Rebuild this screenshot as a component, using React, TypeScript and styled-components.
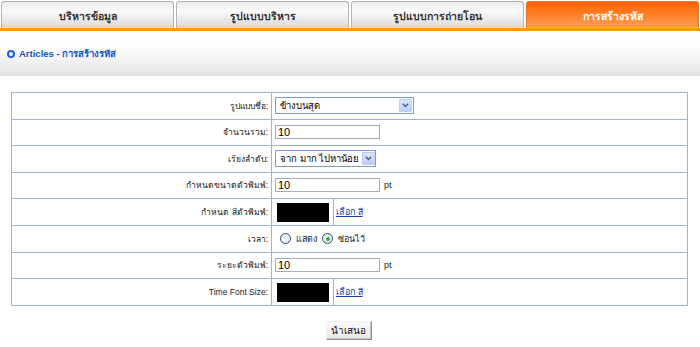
import React, { useState } from "react";
import styled, { createGlobalStyle } from "styled-components";

const GlobalStyle = createGlobalStyle`
  html, body {
    margin: 0;
    padding: 0;
    background: #ffffff;
    font-family: "Liberation Sans", "Noto Sans", sans-serif;
  }
`;

const Page = styled.div`
  width: 700px;
  height: 347px;
  overflow: hidden;
  background: #fff;
`;

const TabBar = styled.div`
  display: flex;
  gap: 2px;
  padding: 0 1px;
  height: 28px;
  align-items: flex-end;
  border-bottom: 3px solid #ff9c00;
`;

const Tab = styled.div<{ $active?: boolean }>`
  flex: 0 0 173px;
  height: 27px;
  box-sizing: border-box;
  display: flex;
  align-items: center;
  justify-content: center;
  border: 1px solid ${(p) => (p.$active ? "#e8742a" : "#b4b4b4")};
  border-bottom: none;
  border-radius: 3px 3px 0 0;
  font-size: 10.5px;
  font-weight: bold;
  padding-top: 2px;
  color: ${(p) => (p.$active ? "#ffffff" : "#333333")};
  background: ${(p) =>
    p.$active
      ? "linear-gradient(#ff6400 0%, #ff7a20 40%, #ffa058 100%)"
      : "linear-gradient(#ececec 0%, #fafafa 35%, #e6e6e6 75%, #d8d8d8 100%)"};
`;

const Heading = styled.div`
  height: 45px;
  display: flex;
  align-items: center;
  padding-left: 7px;
  gap: 4px;
  background: linear-gradient(#ffffff 0%, #fbfbfb 45%, #e2e2e2 100%);
  color: #1058c8;
  font-size: 9.5px;
  font-weight: bold;
`;

const Bullet = styled.span`
  width: 4px;
  height: 4px;
  border: 2px solid #1466d6;
  border-radius: 50%;
  background: #fff;
`;

const FormWrap = styled.div`
  padding: 16px 12px 0 11px;
`;

const Table = styled.table`
  width: 677px;
  border-collapse: collapse;
  border: 1px solid #9fb1e1;
`;

const Row = styled.tr`
  height: 26.5px;
`;

const LabelCell = styled.td`
  width: 256px;
  border: 1px solid #9fb1e1;
  text-align: right;
  padding: 0 3px 0 0;
  font-size: 8.5px;
  color: #222;
`;

const FieldCell = styled.td`
  border: 1px solid #9fb1e1;
  padding: 0 0 0 3px;
  font-size: 9px;
  color: #222;
`;

const Inline = styled.div`
  display: flex;
  align-items: center;
  gap: 4px;
`;

const SelectBox = styled.div<{ $w: number }>`
  width: ${(p) => p.$w}px;
  height: 17px;
  box-sizing: border-box;
  border: 1px solid #7f9db9;
  background: #fff;
  display: flex;
  align-items: center;
  justify-content: space-between;
  gap: 3px;
  padding: 1px 1px 1px 4px;
  font-size: 9.5px;
  white-space: nowrap;
  overflow: hidden;
  color: #000;
`;

const SelectArrow = styled.span`
  flex: 0 0 13px;
  height: 13px;
  box-sizing: border-box;
  border: 1px solid #b9cdf4;
  border-radius: 1px;
  background: linear-gradient(#dde8fd, #bccdf5);
  display: flex;
  align-items: center;
  justify-content: center;
`;

const TextBox = styled.div`
  width: 105px;
  height: 14px;
  box-sizing: border-box;
  border: 1px solid #a5acb2;
  background: #fff;
  padding-left: 2px;
  font-size: 11px;
  line-height: 12px;
  color: #000;
`;

const Unit = styled.span`
  font-size: 9px;
  color: #222;
`;

const ColorTable = styled.div`
  display: flex;
  align-items: stretch;
  height: 26px;
  margin-left: -3px;
`;

const ColorCell = styled.div`
  display: flex;
  align-items: center;
  padding: 0 4px 0 5px;
  border-right: 1px solid #9fb1e1;
`;

const Swatch = styled.div`
  width: 52px;
  height: 19px;
  background: #000;
`;

const PickLink = styled.a`
  align-self: center;
  margin-left: 2px;
  font-size: 9px;
  color: #1a3fb0;
  text-decoration: underline;
`;

const Radio = styled.span<{ $on?: boolean }>`
  width: 11px;
  height: 11px;
  box-sizing: border-box;
  border-radius: 50%;
  border: 1px solid #1c5180;
  background: radial-gradient(circle at 40% 40%, #ffffff, #dcdcd6);
  display: inline-flex;
  align-items: center;
  justify-content: center;
  &::after {
    content: "";
    width: 4px;
    height: 4px;
    border-radius: 50%;
    background: ${(p) => (p.$on ? "#2cb02c" : "transparent")};
  }
`;

const RadioGroup = styled.div`
  display: flex;
  align-items: center;
  gap: 5px;
  padding-left: 5px;
`;

const Actions = styled.div`
  display: flex;
  justify-content: center;
  padding: 15px 0 0 0;
  margin-left: -2px;
`;

const SubmitButton = styled.button`
  width: 46px;
  height: 19px;
  padding: 0;
  font-family: inherit;
  font-size: 10px;
  color: #111;
  background: linear-gradient(#fafafa, #e8e8e8);
  border: 1px solid;
  border-color: #f4f4f4 #8c8c8c #8c8c8c #f4f4f4;
  box-shadow: inset -1px -1px 0 #c8c8c8;
`;

const Chevron = () => (
  <svg width="7" height="5" viewBox="0 0 7 5">
    <path d="M0.8 0.8 L3.5 3.5 L6.2 0.8" fill="none" stroke="#4d6185" strokeWidth="1.5" />
  </svg>
);

const tabs = ["บริหารข้อมูล", "รูปแบบบริหาร", "รูปแบบการถ่ายโอน", "การสร้างรหัส"];

export default function App() {
  const [active] = useState(3);
  return (
    <Page>
      <GlobalStyle />
      <TabBar>
        {tabs.map((t, i) => (
          <Tab key={t} $active={i === active}>
            {t}
          </Tab>
        ))}
      </TabBar>
      <Heading>
        <Bullet />
        Articles - การสร้างรหัส
      </Heading>
      <FormWrap>
        <Table>
          <tbody>
            <Row>
              <LabelCell>รูปแบบชื่อ:</LabelCell>
              <FieldCell>
                <SelectBox $w={139}>
                  ข้างบนสุด
                  <SelectArrow>
                    <Chevron />
                  </SelectArrow>
                </SelectBox>
              </FieldCell>
            </Row>
            <Row>
              <LabelCell>จำนวนรวม:</LabelCell>
              <FieldCell>
                <TextBox>10</TextBox>
              </FieldCell>
            </Row>
            <Row>
              <LabelCell>เรียงลำดับ:</LabelCell>
              <FieldCell>
                <SelectBox $w={101}>
                  จาก มาก ไปหาน้อย
                  <SelectArrow>
                    <Chevron />
                  </SelectArrow>
                </SelectBox>
              </FieldCell>
            </Row>
            <Row>
              <LabelCell>กำหนดขนาดตัวพิมพ์:</LabelCell>
              <FieldCell>
                <Inline>
                  <TextBox>10</TextBox>
                  <Unit>pt</Unit>
                </Inline>
              </FieldCell>
            </Row>
            <Row>
              <LabelCell>กำหนด สีตัวพิมพ์:</LabelCell>
              <FieldCell>
                <ColorTable>
                  <ColorCell>
                    <Swatch />
                  </ColorCell>
                  <PickLink href="#">เลือก สี</PickLink>
                </ColorTable>
              </FieldCell>
            </Row>
            <Row>
              <LabelCell>เวลา:</LabelCell>
              <FieldCell>
                <RadioGroup>
                  <Radio />
                  <Unit>แสดง</Unit>
                  <Radio $on />
                  <Unit>ซ่อนไว้</Unit>
                </RadioGroup>
              </FieldCell>
            </Row>
            <Row>
              <LabelCell>ระยะตัวพิมพ์:</LabelCell>
              <FieldCell>
                <Inline>
                  <TextBox>10</TextBox>
                  <Unit>pt</Unit>
                </Inline>
              </FieldCell>
            </Row>
            <Row>
              <LabelCell>Time Font Size:</LabelCell>
              <FieldCell>
                <ColorTable>
                  <ColorCell>
                    <Swatch />
                  </ColorCell>
                  <PickLink href="#">เลือก สี</PickLink>
                </ColorTable>
              </FieldCell>
            </Row>
          </tbody>
        </Table>
        <Actions>
          <SubmitButton>นำเสนอ</SubmitButton>
        </Actions>
      </FormWrap>
    </Page>
  );
}
